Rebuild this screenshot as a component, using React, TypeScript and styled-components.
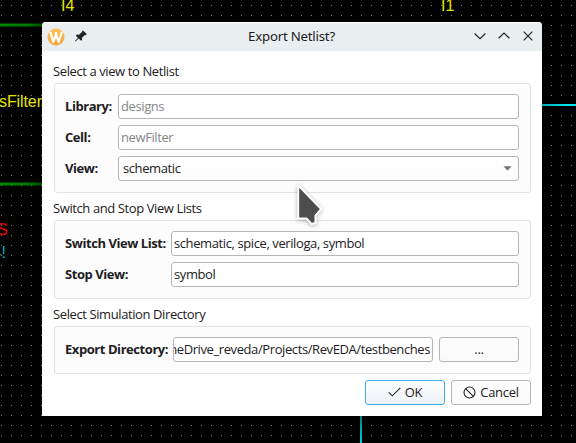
import React from "react";
import styled, { createGlobalStyle } from "styled-components";

const GlobalStyle = createGlobalStyle`
  * { box-sizing: border-box; }
  body { margin: 0; background: #000; overflow: hidden; }
  svg { display: block; flex: none; }
`;

const Desktop = styled.main`
  position: relative;
  width: 576px;
  height: 443px;
  overflow: hidden;
  background: #000;
  padding: 22px 34px 27px 42px;
  font: 13px/18px "Open Sans", "Noto Sans", sans-serif;
  letter-spacing: -0.4px;
  color: #1d2023;
`;

const Schematic = styled.svg`
  position: absolute;
  inset: 0;
  font-family: "Liberation Sans", Arial, sans-serif;
  letter-spacing: 0;
`;

const Dialog = styled.section`
  position: relative;
  width: 500px;
  height: 394px;
  display: flex;
  flex-direction: column;
  background: #fff;
  border-radius: 4px 4px 0 0;
  overflow: hidden;
`;

const TitleBar = styled.header`
  display: grid;
  grid-template-columns: 1fr auto 1fr;
  align-items: center;
  height: 29px;
  padding: 0 6px 0 5px;
  background: #e9eef1;
  border-top: 1px solid #fcfdfd;
`;

const TitleIcons = styled.div<{ $end?: boolean }>`
  display: flex;
  align-items: center;
  gap: 8px;
  justify-content: ${(p) => (p.$end ? "flex-end" : "flex-start")};
`;

const Title = styled.h1`
  margin: 0;
  padding-bottom: 2px;
  font: 400 13.2px/18px "Noto Sans", sans-serif;
  letter-spacing: -0.2px;
`;

const Body = styled.div`
  display: flex;
  flex-direction: column;
  padding: 11px 11px 0 12px;
`;

const GroupTitle = styled.h2`
  margin: 0 0 0 -1px;
  height: 21px;
  font-size: 13px;
  line-height: 18px;
  font-weight: 400;
`;

const GroupBox = styled.div`
  display: flex;
  flex-direction: column;
  gap: 6px;
  padding: 10px 11px 11px 10px;
  margin-bottom: 6px;
  background: #fcfcfc;
  border: 1px solid #e1e2e2;
  border-radius: 3px;
`;

const Row = styled.div<{ $label: number }>`
  display: grid;
  grid-template-columns: ${(p) => p.$label}px minmax(0, 1fr) auto;
  height: 25px;
`;

const Label = styled.label`
  font-weight: 700;
  line-height: 24px;
  letter-spacing: -0.44px;
  white-space: nowrap;
`;

const Field = styled.div<{ $muted?: boolean; $end?: boolean }>`
  display: flex;
  justify-content: ${(p) => (p.$end ? "flex-end" : "flex-start")};
  height: 25px;
  padding: 0 2px;
  overflow: hidden;
  line-height: 22px;
  white-space: nowrap;
  background: #fff;
  color: ${(p) => (p.$muted ? "#858687" : "#1d2023")};
  border: 1px solid #b5b6b6;
  border-radius: 3px;
`;

const Select = styled(Field)`
  justify-content: space-between;
  padding: 0 6px 0 4px;
  background: linear-gradient(#fff, #fbfbfb);

  svg {
    margin-top: 9px;
  }
`;

const Button = styled.button<{ $primary?: boolean }>`
  display: flex;
  align-items: center;
  justify-content: center;
  gap: 4px;
  width: 80px;
  height: 25px;
  padding: 0 0 1px;
  font: inherit;
  letter-spacing: -0.3px;
  color: inherit;
  background: ${(p) => (p.$primary ? "linear-gradient(#fdfdfe, #eef3f8)" : "linear-gradient(#fdfdfd, #fafafa)")};
  border: 1px solid ${(p) => (p.$primary ? "#3daee9" : "#b5b6b6")};
  border-radius: 3px;
`;

const BrowseButton = styled(Button)`
  margin-left: 6px;
`;

const Actions = styled.footer`
  display: flex;
  justify-content: flex-end;
  gap: 6px;
`;

const Pointer = styled.svg`
  position: absolute;
  left: 290px;
  top: 178px;
`;

const Canvas = () => (
  <Schematic width="576" height="443">
    <defs>
      <pattern id="grid" width="10" height="10" patternUnits="userSpaceOnUse">
        <rect x="1" y="5" width="1" height="1" fill="#808080" />
      </pattern>
      <linearGradient id="net" x1="0" x2="1">
        <stop stopColor="#008800" />
        <stop offset=".65" stopColor="#007b00" />
        <stop offset="1" stopColor="#004d00" />
      </linearGradient>
      <linearGradient id="wire" x1="0" x2="1">
        <stop stopColor="#00a5ad" />
        <stop offset=".7" stopColor="#00e5ef" />
      </linearGradient>
      <linearGradient id="wireDown" x1="0" x2="0" y1="0" y2="1">
        <stop stopColor="#007f83" />
        <stop offset="1" stopColor="#00d5da" />
      </linearGradient>
    </defs>
    <rect width="576" height="443" fill="url(#grid)" />
    <rect y="23.5" width="42" height="3" fill="url(#net)" />
    <rect y="182.5" width="42" height="3" fill="url(#net)" />
    <rect x="542" y="104" width="34" height="2" fill="url(#wire)" />
    <rect x="360" y="416" width="2" height="27" fill="url(#wireDown)" />
    <g fill="#e5e500" fontSize="16">
      <text x="61" y="11">I4</text>
      <text x="441" y="11">I1</text>
      <text x="-1" y="107" textLength="43">sFilter</text>
    </g>
    <text x="-3" y="235" fontSize="16" fill="#f00000">S</text>
    <text x="-7.5" y="258" fontSize="16" fill="#00b8cc">4!</text>
  </Schematic>
);

const WaylandIcon = () => (
  <svg width="18" height="18" viewBox="0 0 18 18">
    <defs>
      <linearGradient id="amber" x1="0" x2="0" y1="0" y2="1">
        <stop stopColor="#ffc35c" />
        <stop offset="1" stopColor="#efa235" />
      </linearGradient>
    </defs>
    <circle cx="9" cy="9" r="8.5" fill="url(#amber)" />
    <path d="M3.4 4 6.2 14 9 6.3 11.6 14 14.9 4M9 4v3" fill="none" stroke="#fff" strokeWidth="2.2" strokeLinejoin="round" />
  </svg>
);

const PinIcon = () => (
  <svg width="16" height="16" viewBox="0 0 16 16">
    <path d="M9.7 1.3 13.8 4.9 12.8 6.2 11.8 6.1 9 8.8 9.2 10.9 8.1 11.8 5.8 9.6 2.4 12.6 1.8 12.1 5 8.9 2.8 6.8 3.8 5.6 6 5.8 8.9 3.1z" fill="#232629" />
  </svg>
);

const WindowIcon = ({ d }: { d: string }) => (
  <svg width="16" height="16" viewBox="0 0 16 16" fill="none" stroke="#232629" strokeWidth="1.2">
    <path d={d} />
  </svg>
);

export default function App() {
  return (
    <>
      <GlobalStyle />
      <Desktop>
        <Canvas />
        <Dialog>
          <TitleBar>
            <TitleIcons>
              <WaylandIcon />
              <PinIcon />
            </TitleIcons>
            <Title>Export Netlist?</Title>
            <TitleIcons $end>
              <WindowIcon d="M2.6 4.5 8 9.7l5.4-5.2" />
              <WindowIcon d="M2.6 9.2 8 4l5.4 5.2" />
              <WindowIcon d="M3.7 2.7l8.6 8.6M12.3 2.7l-8.6 8.6" />
            </TitleIcons>
          </TitleBar>
          <Body>
            <GroupTitle>Select a view to Netlist</GroupTitle>
            <GroupBox>
              <Row $label={53}>
                <Label>Library:</Label>
                <Field $muted>designs</Field>
              </Row>
              <Row $label={53}>
                <Label>Cell:</Label>
                <Field $muted>newFilter</Field>
              </Row>
              <Row $label={53}>
                <Label>View:</Label>
                <Select>
                  schematic
                  <svg width="9" height="5" viewBox="0 0 9 5">
                    <path d="M.5.3h8L4.5 4.6z" fill="#6d6f70" />
                  </svg>
                </Select>
              </Row>
            </GroupBox>
            <GroupTitle>Switch and Stop View Lists</GroupTitle>
            <GroupBox>
              <Row $label={106}>
                <Label>Switch View List:</Label>
                <Field>schematic, spice, veriloga, symbol</Field>
              </Row>
              <Row $label={106}>
                <Label>Stop View:</Label>
                <Field>symbol</Field>
              </Row>
            </GroupBox>
            <GroupTitle>Select Simulation Directory</GroupTitle>
            <GroupBox>
              <Row $label={108}>
                <Label>Export Directory:</Label>
                <Field $end>neDrive_reveda/Projects/RevEDA/testbenches</Field>
                <BrowseButton>...</BrowseButton>
              </Row>
            </GroupBox>
            <Actions>
              <Button $primary>
                <svg width="13" height="12" viewBox="0 0 13 12">
                  <path d="M.8 6.3 4.3 9.8 12.3 1.8" fill="none" stroke="#232629" strokeWidth="1.1" />
                </svg>
                OK
              </Button>
              <Button>
                <svg width="13" height="13" viewBox="0 0 13 13" fill="none" stroke="#232629" strokeWidth="1.1">
                  <circle cx="6.5" cy="6.5" r="5.5" />
                  <path d="M2.6 2.6l7.8 7.8" />
                </svg>
                Cancel
              </Button>
            </Actions>
          </Body>
        </Dialog>
        <Pointer width="40" height="54" viewBox="290 178 40 54">
          <path
            d="M298.2 185.2V218.5H306.5L311.4 223.9 315.5 223V215.6L321.2 209z"
            fill="#4d4d4d"
            stroke="#fff"
            strokeWidth="2"
            strokeLinejoin="round"
            filter="drop-shadow(0 1px 2px rgba(0,0,0,.3))"
          />
        </Pointer>
      </Desktop>
    </>
  );
}
